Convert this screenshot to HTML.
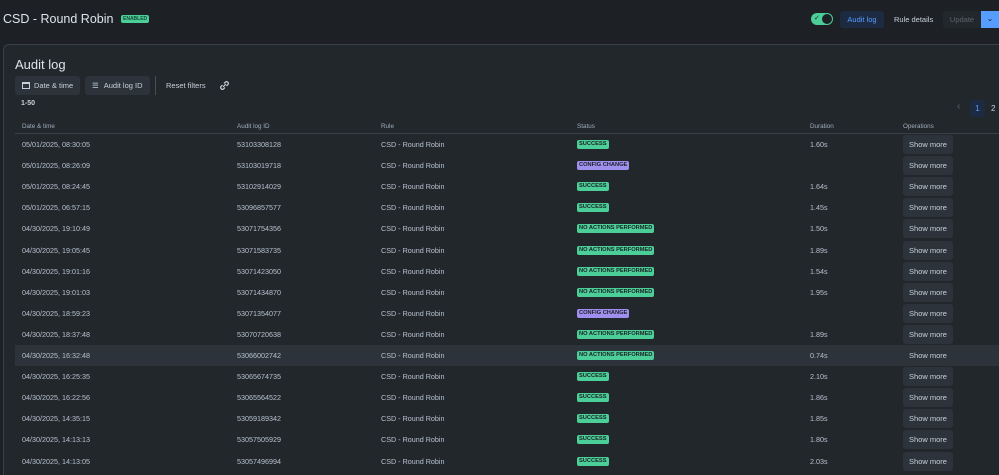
<!DOCTYPE html>
<html><head><meta charset="utf-8"><style>
*{box-sizing:border-box;margin:0;padding:0}
html,body{width:999px;height:475px;overflow:hidden}
body{background:#1d2125;font-family:"Liberation Sans",sans-serif;color:#b6c2cf;position:relative}
.abs{position:absolute;white-space:nowrap}
.card{position:absolute;left:3px;top:44px;width:996px;height:431px;background:#22272b;border:1px solid #38414a;border-right:none;border-bottom:none;border-radius:6px 0 0 0}
.btn{position:absolute;height:19px;border-radius:3px;background:#2c333a;color:#c7d1db;font-size:7.5px;line-height:19px;padding:0 7px;white-space:nowrap}
.lz{position:absolute;font-size:5.7px;font-weight:bold;color:#1d2125;height:9px;line-height:9px;padding:0 2px;border-radius:2px;top:6px;white-space:nowrap}
.row{position:absolute;left:15px;width:984px;height:21px;font-size:7.2px;color:#b6c2cf}
.row span{position:absolute;top:6px;line-height:9px;white-space:nowrap}
.sm{position:absolute;left:888px;top:1px;width:50px;height:19px;background:#2c333a;border-radius:3px;color:#c7d1db;font-size:7.5px;line-height:19px;text-align:center}
</style></head><body>
<div class="abs" style="left:3px;top:12px;font-size:12.5px;color:#dee4ea">CSD - Round Robin</div>
<div class="abs" style="left:121px;top:15px;background:#4bce97;color:#164b35;font-size:5px;font-weight:bold;padding:0 2px;height:8px;line-height:8px;border-radius:2px">ENABLED</div>
<div class="abs" style="left:811px;top:13px;width:22px;height:12px;border-radius:6px;background:#4bce97"><div style="position:absolute;right:1px;top:1px;width:10px;height:10px;border-radius:5px;background:#1d2125"></div><div style="position:absolute;left:3px;top:1px;font-size:7px;color:#1d2125">✓</div></div>
<div class="abs" style="left:840px;top:11px;width:44px;height:17px;background:#1c2b41;border-radius:3px;color:#579dff;font-size:7.5px;line-height:17px;text-align:center">Audit log</div>
<div class="abs" style="left:894px;top:11px;font-size:7.5px;line-height:17px;color:#c7d1db">Rule details</div>
<div class="abs" style="left:943px;top:11px;width:38px;height:17px;background:#22272b;border-radius:3px;color:#5a6470;font-size:7.5px;line-height:17px;text-align:center">Update</div>
<div class="abs" style="left:981px;top:11px;width:18px;height:17px;background:#579dff;color:#1d2125;font-size:8px;line-height:15px;text-align:center">⌄</div>
<div class="card"></div>
<div class="abs" style="left:15px;top:57px;font-size:13px;color:#dee4ea">Audit log</div>
<div class="btn" style="left:15px;top:76px;width:65px"><span style="display:inline-block;width:8px;height:7px;border:1px solid #c7d1db;border-top-width:2px;vertical-align:-1px;margin-right:4px"></span>Date &amp; time</div>
<div class="btn" style="left:85px;top:76px;width:65px"><span style="margin-right:5px">☰</span>Audit log ID</div>
<div class="abs" style="left:155px;top:76px;width:1px;height:19px;background:#454f59"></div>
<div class="abs" style="left:166px;top:76px;font-size:7.5px;line-height:19px;color:#c7d1db">Reset filters</div>
<svg class="abs" style="left:219px;top:80px" width="11" height="11" viewBox="0 0 11 11" fill="none" stroke="#c7d1db" stroke-width="1.2"><path d="M5 3.5l1.5-1.5a1.8 1.8 0 0 1 2.5 2.5L7.5 6M6 7.5L4.5 9a1.8 1.8 0 0 1-2.5-2.5L3.5 5M4 7l3-3"/></svg>
<div class="abs" style="left:21px;top:100px;font-size:7px;font-weight:bold;color:#c7d1db">1-50</div>
<div class="abs" style="left:957px;top:101px;font-size:10px;color:#5a6470">‹</div>
<div class="abs" style="left:970px;top:100px;width:15px;height:17px;background:#1c2b41;border-radius:3px;color:#579dff;font-size:8px;line-height:17px;text-align:center">1</div>
<div class="abs" style="left:991px;top:100px;font-size:8px;line-height:17px;color:#c7d1db">2</div>
<div class="abs" style="left:22px;top:123px;font-size:6.3px;color:#9fadbc">Date &amp; time</div>
<div class="abs" style="left:237px;top:123px;font-size:6.3px;color:#9fadbc">Audit log ID</div>
<div class="abs" style="left:381px;top:123px;font-size:6.3px;color:#9fadbc">Rule</div>
<div class="abs" style="left:577px;top:123px;font-size:6.3px;color:#9fadbc">Status</div>
<div class="abs" style="left:810px;top:123px;font-size:6.3px;color:#9fadbc">Duration</div>
<div class="abs" style="left:903px;top:123px;font-size:6.3px;color:#9fadbc">Operations</div>
<div class="abs" style="left:15px;top:133px;width:984px;height:1px;background:#38414a"></div>
<div id="rows"></div>
<script>
var d=[["05/01/2025, 08:30:05","53103308128","S","1.60s"],["05/01/2025, 08:26:09","53103019718","C",""],["05/01/2025, 08:24:45","53102914029","S","1.64s"],["05/01/2025, 06:57:15","53096857577","S","1.45s"],["04/30/2025, 19:10:49","53071754356","N","1.50s"],["04/30/2025, 19:05:45","53071583735","N","1.89s"],["04/30/2025, 19:01:16","53071423050","N","1.54s"],["04/30/2025, 19:01:03","53071434870","N","1.95s"],["04/30/2025, 18:59:23","53071354077","C",""],["04/30/2025, 18:37:48","53070720638","N","1.89s"],["04/30/2025, 16:32:48","53066002742","N","0.74s"],["04/30/2025, 16:25:35","53065674735","S","2.10s"],["04/30/2025, 16:22:56","53065564522","S","1.86s"],["04/30/2025, 14:35:15","53059189342","S","1.85s"],["04/30/2025, 14:13:13","53057505929","S","1.80s"],["04/30/2025, 14:13:05","53057496994","S","2.03s"]];
var h="";d.forEach(function(r,i){var t=134+i*21.1;var s=r[2]=="S"?'<div class="lz" style="left:562px;background:#4bce97">SUCCESS</div>':r[2]=="C"?'<div class="lz" style="left:562px;background:#9f8fef">CONFIG CHANGE</div>':'<div class="lz" style="left:562px;background:#4bce97">NO ACTIONS PERFORMED</div>';
h+='<div class="row" style="top:'+t+'px;'+(i==10?'background:#2c333a':'')+'"><span style="left:7px">'+r[0]+'</span><span style="left:222px">'+r[1]+'</span><span style="left:366px">CSD - Round Robin</span>'+s+'<span style="left:795px">'+r[3]+'</span><div class="sm">Show more</div></div>';});
document.getElementById("rows").innerHTML=h;
</script>
</body></html>
